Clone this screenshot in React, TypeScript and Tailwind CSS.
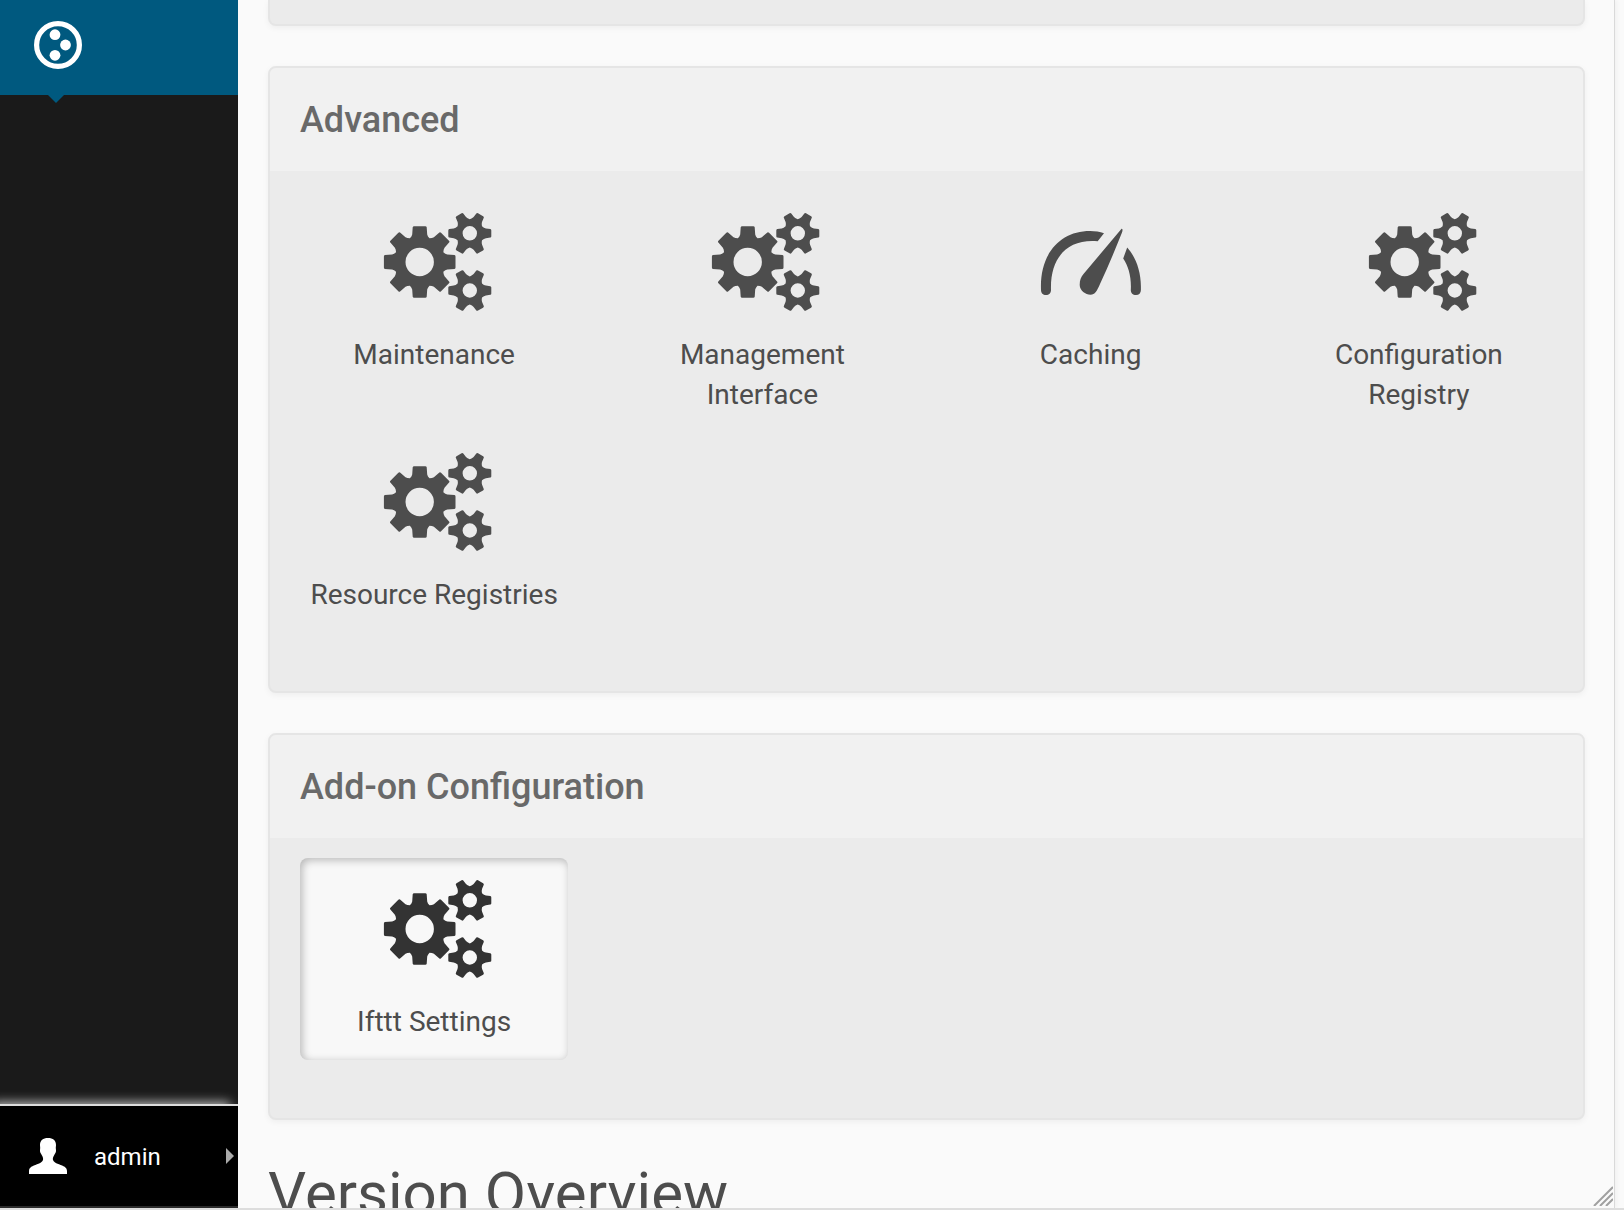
import React from "react";

/** Builds a gear outline with rounded valleys and a round hole. */
function gear(
  cx: number,
  cy: number,
  teeth: number,
  tip: number,
  tipHalf: number,
  root: number,
  rootHalf: number,
  hole: number,
): string {
  const step = (Math.PI * 2) / teeth;
  let d = "";
  for (let i = 0; i < teeth; i++) {
    const a = i * step;
    const at = (along: number, across: number, angle = a) =>
      `${(cx + along * Math.cos(angle) - across * Math.sin(angle)).toFixed(2)} ${(
        cy + along * Math.sin(angle) + across * Math.cos(angle)
      ).toFixed(2)}`;
    d += `${i === 0 ? "M" : "L"}${at(root + 2, -rootHalf + 0.2)}`;
    d += `L${at(tip - 1, -tipHalf - 0.4)}Q${at(tip, -tipHalf - 0.2)} ${at(tip, -tipHalf + 1)}`;
    d += `L${at(tip, tipHalf - 1)}Q${at(tip, tipHalf + 0.2)} ${at(tip - 1, tipHalf + 0.4)}`;
    d += `L${at(root + 2, rootHalf - 0.2)}Q${at(root, rootHalf + 0.2)} ${at(root, 0, a + step / 2)}`;
    d += `Q${at(root, -rootHalf - 0.2, a + step)} ${at(root + 2, -rootHalf + 0.2, a + step)}`;
  }
  d += `ZM${cx - hole} ${cy}a${hole} ${hole} 0 1 0 ${hole * 2} 0a${hole} ${hole} 0 1 0 ${-hole * 2} 0Z`;
  return d;
}

const GEARS =
  gear(45.7, 59, 8, 35.8, 6.6, 25.6, 7.7, 14.2) +
  gear(95.8, 30.3, 6, 21.5, 3.9, 14.1, 5.1, 7.2) +
  gear(95.8, 87.5, 6, 21.5, 3.9, 14.1, 5.1, 7.2);

function GearsIcon() {
  return (
    <svg viewBox="0 0 120 120" className="h-[120px] w-[120px]" fill="currentColor" aria-hidden="true">
      <path fillRule="evenodd" d={GEARS} />
    </svg>
  );
}

function GaugeIcon() {
  return (
    <svg viewBox="0 0 120 120" className="h-[120px] w-[120px]" fill="currentColor" aria-hidden="true">
      <path d="M10 87C8.500 51 29 28 59 28C64 28 69 28.800 73 30.300L66.700 38.200C37 35.500 19 54 20 87C20 90 18 92 15 92C12 92 10 90 10 87Z" />
      <path d="M91 25.800C91.800 26.200 91.600 27.500 91 29.500C84 47 77 64 69 81C66 88 64 91.700 59.500 91.700C54.500 91.700 48.700 87.500 48.700 82C48.700 77 50 74 52.500 71L89.500 27C90.300 26.100 90.700 25.600 91 25.800Z" />
      <path d="M96.200 44.500C104.500 53.500 110 68 109.900 84V87C109.900 90 108 92 105 92C101.800 92 99.800 90 99.800 87C100.500 74 97.500 63.500 92.200 55.500Z" />
    </svg>
  );
}

type Item = { label: string; icon?: "gears" | "gauge"; active?: boolean };

const ADVANCED: Item[] = [
  { label: "Maintenance" },
  { label: "Management Interface" },
  { label: "Caching", icon: "gauge" },
  { label: "Configuration Registry" },
  { label: "Resource Registries" },
];

const ADDONS: Item[] = [{ label: "Ifttt Settings", active: true }];

function Tile({ label, icon, active }: Item) {
  return (
    <a
      href="#"
      className={
        "mx-[30px] flex min-h-[202px] flex-col items-center rounded-lg pt-3 pb-4 text-center text-[#4d4d4d] " +
        (active ? "bg-[#f8f8f8] shadow-[inset_2px_2px_8px_rgba(0,0,0,0.27)]" : "")
      }
    >
      <span className={active ? "text-[#333333]" : ""}>{icon === "gauge" ? <GaugeIcon /> : <GearsIcon />}</span>
      <span className="mt-3 text-[28px] leading-[40px]">{label}</span>
    </a>
  );
}

function Panel({ title, items }: { title: string; items: Item[] }) {
  return (
    <section className="mt-10 overflow-hidden rounded-lg border-2 border-[#e5e5e5] bg-[#ebebeb] shadow-[0_2px_6px_rgba(0,0,0,0.05)]">
      <h2 className="bg-[#f1f1f1] px-[30px] pt-7 pb-[27px] text-4xl leading-[48px] font-medium text-[#696969]">
        {title}
      </h2>
      <div className="grid grid-cols-4 items-start pt-5 pb-[58px]">
        {items.map((item) => (
          <Tile key={item.label} {...item} />
        ))}
      </div>
    </section>
  );
}

function Sidebar() {
  return (
    <nav className="flex w-[238px] shrink-0 flex-col bg-[#1a1a1a]">
      <a href="#" aria-label="Home" className="relative block h-[95px] bg-[#00597f] pt-[21px] pl-[34px] text-white">
        <svg viewBox="0 0 48 48" className="h-12 w-12" aria-hidden="true">
          <circle cx="24" cy="24" r="21.400" fill="none" stroke="currentColor" strokeWidth="5.200" />
          <g fill="currentColor">
            <circle cx="21" cy="13.700" r="5.400" />
            <circle cx="31.500" cy="24" r="5.400" />
            <circle cx="21" cy="34.300" r="5.400" />
          </g>
        </svg>
        <span className="absolute top-full left-12 border-x-8 border-t-8 border-x-transparent border-t-[#00597f]" />
      </a>
      <div className="min-h-0 flex-1 overflow-hidden" />
      <div className="border-b-2 border-[#2b2b2b] bg-[#2b2b2b]">
        <button
          type="button"
          className="flex h-[102px] w-full items-center border-t-2 border-[#dddddd] bg-black pr-1 pl-[29px] text-2xl text-white shadow-[-8px_-2px_10px_rgba(255,255,255,0.7)] [clip-path:inset(-20px_0_0_0)]"
        >
          <svg viewBox="0 0 38 36" className="h-9 w-[38px]" fill="currentColor" aria-hidden="true">
            <path d="M19 0C24 0 27 2.500 27 7C27 8.500 26.600 9.800 26.900 11C27.600 14 26 15.500 25 17.500C24 19.500 23.600 20.500 24 22C24.500 24 27 25.200 30 26.300C34.500 28 38 29.300 38 33V36H0V33C0 29.300 3.500 28 8 26.300C11 25.200 13.500 24 14 22C14.400 20.500 14 19.500 13 17.500C12 15.500 10.400 14 11.100 11C11.400 9.800 11 8.500 11 7C11 2.500 14 0 19 0Z" />
          </svg>
          <span className="ml-[27px] flex-1 pt-0.5 text-left">admin</span>
          <span className="border-y-8 border-l-8 border-y-transparent border-l-[#aaaaaa]" />
        </button>
      </div>
    </nav>
  );
}

export default function App() {
  return (
    <div className="flex h-screen flex-col overflow-hidden border-b-2 border-[#dddddd] bg-[#fafafa] font-[Roboto,sans-serif]">
      <div className="flex min-h-0 flex-1">
        <Sidebar />
        <main className="relative z-10 mr-[9px] min-w-0 flex-1 overflow-hidden border-r border-[#d9d9d9] bg-[#fafafa] pr-[29px] pl-[30px] shadow-[2px_0_4px_rgba(0,0,0,0.04)]">
          <div className="h-[26px] rounded-b-lg border-2 border-t-0 border-[#e5e5e5] bg-[#ebebeb] shadow-[0_2px_6px_rgba(0,0,0,0.05)]" />
          <Panel title="Advanced" items={ADVANCED} />
          <Panel title="Add-on Configuration" items={ADDONS} />
          <h1 className="mt-[38px] text-[60px] leading-[72px] text-[#4d4d4d]">Version Overview</h1>
          <svg
            viewBox="0 0 20 20"
            className="absolute right-px bottom-0.5 h-5 w-5"
            fill="none"
            stroke="#a0a0a0"
            strokeWidth="2"
            aria-hidden="true"
          >
            <path d="M1 20L20 1M7 20L20 7M13 20L20 13" />
          </svg>
        </main>
      </div>
    </div>
  );
}
